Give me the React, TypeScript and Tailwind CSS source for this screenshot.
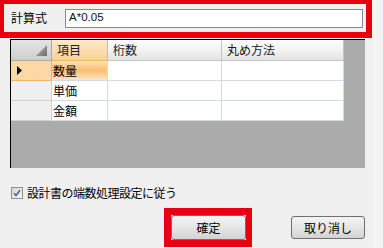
import React from "react";

const cjk = "font-['Noto_Sans_CJK_JP','Noto_Sans',sans-serif]";

const cols = [
  { key: "item", label: "項目", w: "w-[56px]" },
  { key: "digits", label: "桁数", w: "w-[114px]" },
  { key: "round", label: "丸め方法", w: "w-[122px]" },
];

const rows = ["数量", "単価", "金額"];

function HeaderRow() {
  return (
    <div className="flex h-[21px] shrink-0">
      {/* top-left corner */}
      <div className="relative w-[41px] shrink-0 border-r border-b border-[#a9a9a9] bg-gradient-to-b from-[#e4e4e4] to-[#cfcfcf]">
        <svg className="absolute right-[4px] bottom-[4px]" width="11" height="11" viewBox="0 0 11 11">
          <defs>
            <linearGradient id="tri" x1="0" y1="0" x2="1" y2="1">
              <stop offset="0" stopColor="#b5b5b5" />
              <stop offset="1" stopColor="#6d6d6d" />
            </linearGradient>
          </defs>
          <polygon points="11,0 11,11 0,11" fill="url(#tri)" />
        </svg>
      </div>
      {cols.map((c) => (
        <div
          key={c.key}
          className={[
            c.w,
            "flex shrink-0 items-center border-r border-b pl-[5px] text-[12px] text-[#1a1a1a]",
            c.key === "item"
              ? "border-[#f3b467] bg-gradient-to-b from-[#fde9c9] to-[#fbd29a]"
              : "border-[#c5c5c5] bg-gradient-to-b from-[#fdfdfd] via-[#f3f3f3] to-[#e3e3e3]",
          ].join(" ")}
        >
          {c.label}
        </div>
      ))}
    </div>
  );
}

function BodyRow({ label, selected }: { label: string; selected: boolean }) {
  return (
    <div className="flex h-[20px] shrink-0">
      <div
        className={[
          "flex w-[41px] shrink-0 items-center border-r border-b pl-[6px]",
          selected ? "border-[#f0b46a] bg-[#fcd8a4]" : "border-[#d0d0d0] bg-[#f0f0f0]",
        ].join(" ")}
      >
        {selected && (
          <svg width="5" height="9" viewBox="0 0 5 9">
            <polygon points="0,0 5,4.5 0,9" fill="#000" />
          </svg>
        )}
      </div>
      <div
        className={[
          "flex w-[56px] shrink-0 items-center border-r border-b border-[#d5dbe5] pl-[1px] text-[12px] text-black",
          selected ? "bg-gradient-to-b from-[#fde2b6] via-[#f9bd73] to-[#fde6c4]" : "bg-white",
        ].join(" ")}
      >
        {label}
      </div>
      <div className="w-[114px] shrink-0 border-r border-b border-[#d5dbe5] bg-white" />
      <div className="w-[122px] shrink-0 border-r border-b border-[#d5dbe5] bg-white" />
    </div>
  );
}

export default function App() {
  return (
    <div className={`flex h-[248px] w-[384px] overflow-hidden bg-[#f0f0f0] ${cjk} text-black`}>
      <div className="flex w-[373px] shrink-0 flex-col">
        {/* formula row */}
        <div className="flex h-[38px] w-[372px] items-center border-t-4 border-l-4 border-r-[6px] border-b-[6px] border-[#e60012] pl-[7px]">
          <div className="w-[54px] shrink-0 text-[12px]">計算式</div>
          <div className="flex h-[19px] w-[298px] items-center border border-[#8a8a8a] bg-white pl-[3px] font-['Liberation_Sans',sans-serif] text-[11.5px] text-[#111]">
            A*0.05
          </div>
        </div>

        {/* grid */}
        <div className="mt-px ml-[10px] flex h-[129px] w-[355px] flex-col border-t border-l border-black bg-[#ababab]">
          <HeaderRow />
          {rows.map((r, i) => (
            <BodyRow key={r} label={r} selected={i === 0} />
          ))}
        </div>

        {/* checkbox */}
        <div className="mt-[16px] ml-[11px] flex items-center gap-[4px]">
          <div className="flex h-[12px] w-[12px] items-center justify-center border border-[#8e8f8f] bg-gradient-to-br from-[#d6d6d6] to-[#f7f7f7]">
            <svg width="8" height="8" viewBox="0 0 8 8">
              <path d="M1 4.2 L3 6.4 L7 1.2" fill="none" stroke="#4b6496" strokeWidth="1.6" />
            </svg>
          </div>
          <span className="text-[12px] tracking-[-0.5px]">設計書の端数処理設定に従う</span>
        </div>

        {/* buttons */}
        <div className="mt-[6px] flex items-start">
          <div className="ml-[164px] border-y-[7px] border-l-[7px] border-r-[6px] border-[#e60012]">
            <button className="flex h-[25px] w-[75px] items-center justify-center rounded-[3px] border border-[#707070] bg-gradient-to-b from-[#f4f4f4] via-[#e6e6e6] to-[#d2d2d2] text-[12px]">
              確定
            </button>
          </div>
          <button className="mt-[8px] ml-[39px] flex h-[23px] w-[74px] items-center justify-center rounded-[3px] border border-[#707070] bg-gradient-to-b from-[#f4f4f4] via-[#e6e6e6] to-[#d2d2d2] text-[12px]">
            取り消し
          </button>
        </div>
      </div>
      <div className="flex-1 border-r border-[#d4d4d4] bg-[#f4f4f4]" />
    </div>
  );
}
